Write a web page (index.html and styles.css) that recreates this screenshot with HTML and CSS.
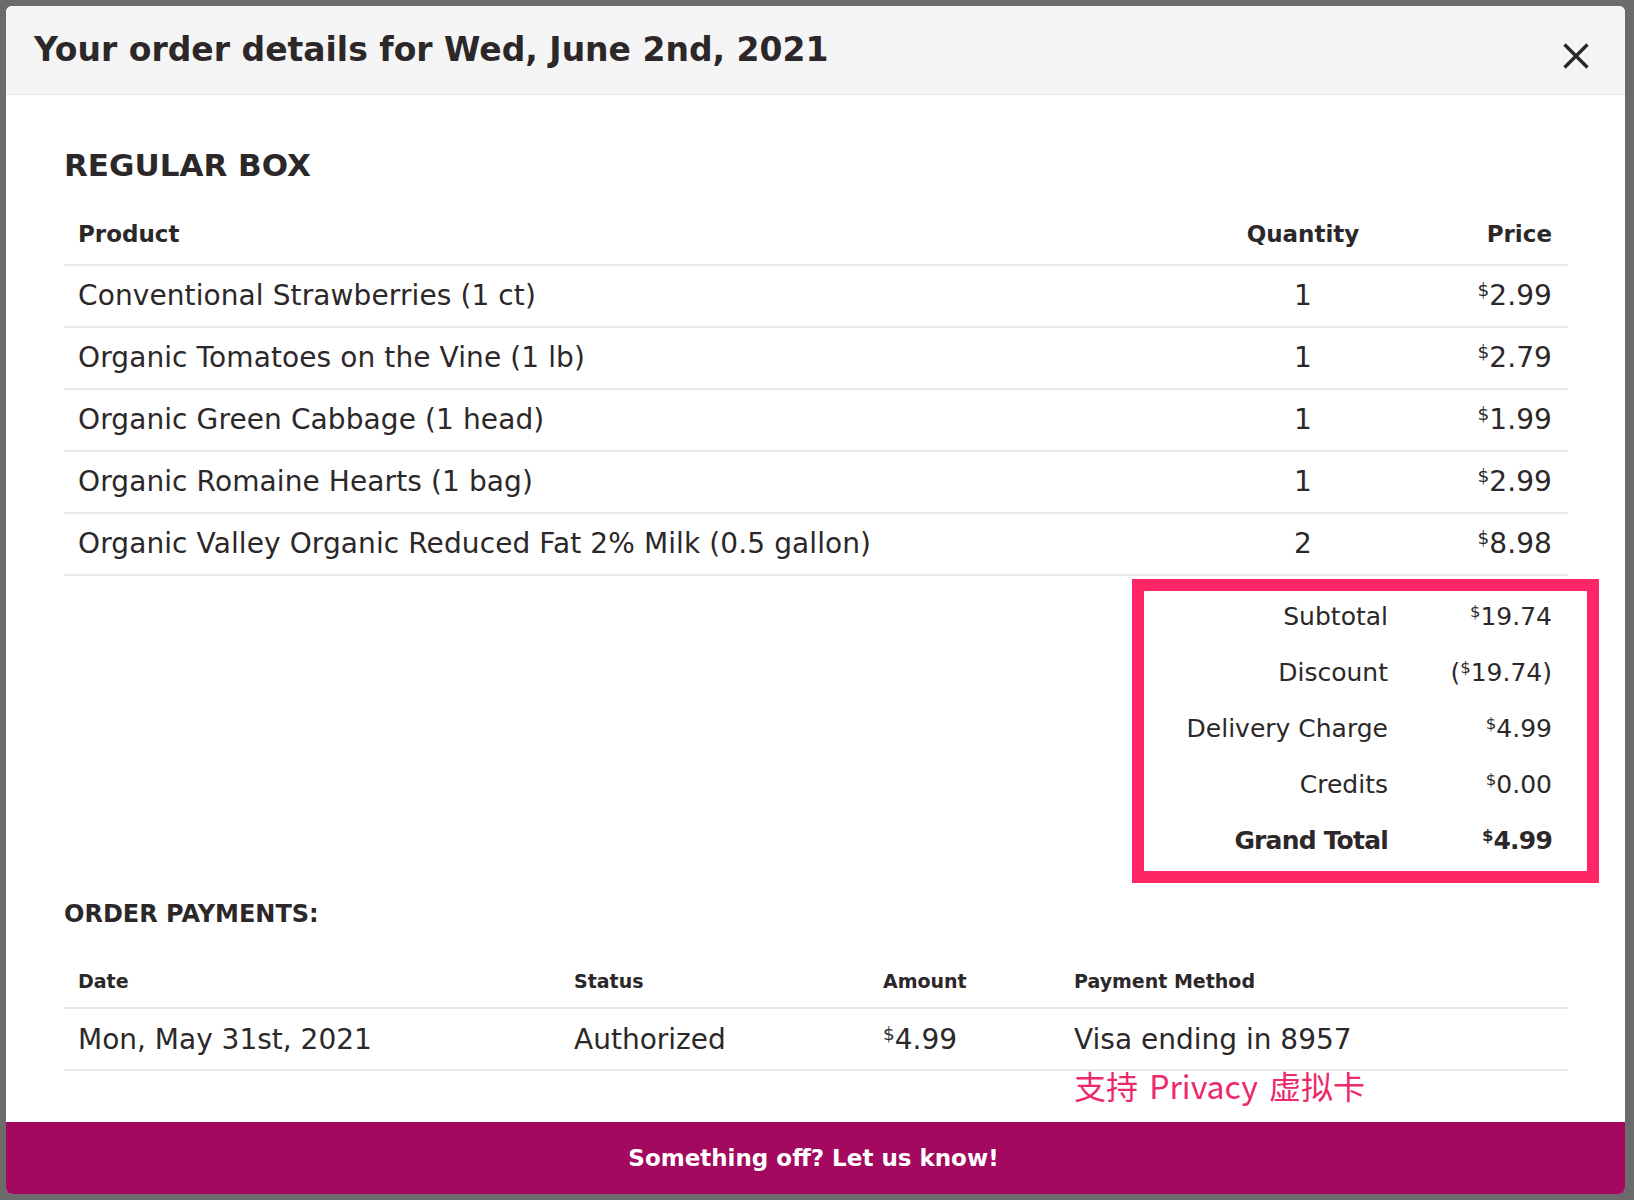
FILE: index.html
```html
<!DOCTYPE html>
<html lang="en">
<head>
<meta charset="utf-8">
<title>Order details</title>
<link rel="stylesheet" href="styles.css">
</head>
<body>
<div class="page">
  <div class="modal">
    <div class="modal-header">
      <h1 class="modal-title">Your order details for Wed, June 2nd, 2021</h1>
      <button class="close" aria-label="Close">
        <svg width="26" height="26" viewBox="0 0 26 26"><path d="M1.5 1.5 L24.5 24.5 M24.5 1.5 L1.5 24.5" stroke="#2c2829" stroke-width="3.4" fill="none"/></svg>
      </button>
    </div>
    <div class="modal-body">
      <h2 class="box-title">REGULAR BOX</h2>
      <table class="items">
        <colgroup><col class="c-prod"><col class="c-qty"><col class="c-price"></colgroup>
        <thead>
          <tr><th class="t-left">Product</th><th class="t-center">Quantity</th><th class="t-right">Price</th></tr>
        </thead>
        <tbody>
          <tr><td class="t-left">Conventional Strawberries (1 ct)</td><td class="t-center">1</td><td class="t-right"><sup>$</sup>2.99</td></tr>
          <tr><td class="t-left">Organic Tomatoes on the Vine (1 lb)</td><td class="t-center">1</td><td class="t-right"><sup>$</sup>2.79</td></tr>
          <tr><td class="t-left">Organic Green Cabbage (1 head)</td><td class="t-center">1</td><td class="t-right"><sup>$</sup>1.99</td></tr>
          <tr><td class="t-left">Organic Romaine Hearts (1 bag)</td><td class="t-center">1</td><td class="t-right"><sup>$</sup>2.99</td></tr>
          <tr><td class="t-left">Organic Valley Organic Reduced Fat 2% Milk (0.5 gallon)</td><td class="t-center">2</td><td class="t-right"><sup>$</sup>8.98</td></tr>
        </tbody>
      </table>
      <div class="summary-wrap">
        <div class="summary">
          <div class="s-label">Subtotal</div><div class="s-value"><sup>$</sup>19.74</div>
          <div class="s-label">Discount</div><div class="s-value">(<sup>$</sup>19.74)</div>
          <div class="s-label">Delivery Charge</div><div class="s-value"><sup>$</sup>4.99</div>
          <div class="s-label">Credits</div><div class="s-value"><sup>$</sup>0.00</div>
          <div class="s-label s-bold">Grand Total</div><div class="s-value s-bold"><sup>$</sup>4.99</div>
        </div>
      </div>
      <h3 class="payments-title">ORDER PAYMENTS:</h3>
      <table class="payments">
        <colgroup><col class="p-date"><col class="p-status"><col class="p-amount"><col class="p-method"></colgroup>
        <thead>
          <tr><th>Date</th><th>Status</th><th>Amount</th><th>Payment Method</th></tr>
        </thead>
        <tbody>
          <tr><td>Mon, May 31st, 2021</td><td>Authorized</td><td><sup>$</sup>4.99</td><td>Visa ending in 8957</td></tr>
        </tbody>
      </table>
      <div class="note-row"><span class="note">支持 Privacy 虚拟卡</span></div>
    </div>
    <div class="footer-bar">Something off? Let us know!</div>
  </div>
</div>
</body>
</html>
```
FILE: styles.css
```css
* { box-sizing: border-box; }
html, body { margin: 0; padding: 0; }
body {
  background: #6b6b6b;
  font-family: "DejaVu Sans", "Noto Sans CJK SC", sans-serif;
  color: #2c2829;
}
.page {
  width: 1634px;
  height: 1200px;
  padding: 6px 9px 6px 6px;
}
.modal {
  width: 1619px;
  height: 1188px;
  background: #ffffff;
  border-radius: 6px;
  overflow: hidden;
  display: flex;
  flex-direction: column;
}
.modal-header {
  height: 89px;
  flex: none;
  background: #f5f5f5;
  border-bottom: 1px solid #e7e7e7;
  display: flex;
  align-items: center;
  justify-content: space-between;
  padding: 0 36px 0 28px;
}
.modal-title {
  margin: 0;
  font-size: 33px;
  font-weight: bold;
  line-height: 40px;
}
.close {
  border: 0;
  padding: 0;
  background: none;
  width: 26px;
  height: 26px;
  align-self: flex-start;
  margin-top: 37px;
  display: block;
}
.close svg { display: block; }
.modal-body {
  flex: 1;
  padding: 0 57px 0 58px;
}
.box-title {
  margin: 50px 0 0;
  font-size: 31px;
  line-height: 40px;
  font-weight: bold;
}
table {
  width: 100%;
  border-collapse: collapse;
  table-layout: fixed;
}
.items { margin-top: 19px; }
.c-prod { width: 1136px; }
.c-qty { width: 206px; }
.c-price { width: 162px; }
.items th {
  height: 61px;
  font-size: 23px;
  font-weight: bold;
  border-bottom: 2px solid #e9e9e9;
  padding: 0 16px 0 14px;
}
.items td {
  height: 62px;
  font-size: 28px;
  letter-spacing: 0.1px;
  border-bottom: 2px solid #e9e9e9;
  padding: 0 16px 2px 14px;
  white-space: nowrap;
}
.t-left { text-align: left; }
.t-center { text-align: center; }
.items .t-center { padding-left: 0; padding-right: 0; }
.t-right { text-align: right; }
sup {
  font-size: 0.66em;
  vertical-align: 0.5em;
  line-height: 0;
  letter-spacing: 0;
}
.summary-wrap {
  display: flex;
  justify-content: flex-end;
  margin: 3px -31px 0 0;
}
.summary {
  width: 467px;
  border: 12px solid #ff2667;
  display: grid;
  grid-template-columns: 244px 164px;
  grid-auto-rows: 56px;
  padding-right: 35px;
  font-size: 25px;
}
.s-label, .s-value {
  text-align: right;
  white-space: nowrap;
  line-height: 52px;
}
.s-bold { font-weight: bold; letter-spacing: -0.8px; }
.payments-title {
  margin: 16px 0 0;
  font-size: 24px;
  line-height: 30px;
  font-weight: bold;
}
.payments { margin-top: 29px; }
.p-date { width: 496px; }
.p-status { width: 309px; }
.p-amount { width: 191px; }
.p-method { width: 508px; }
.payments th {
  height: 50px;
  font-size: 19px;
  font-weight: bold;
  text-align: left;
  padding: 0 0 4px 14px;
  border-bottom: 2px solid #e9e9e9;
}
.payments td {
  height: 62px;
  font-size: 28px;
  text-align: left;
  padding: 0 0 0 14px;
  border-bottom: 2px solid #e9e9e9;
  white-space: nowrap;
}
.note-row {
  padding-left: 1010px;
  line-height: 28px;
}
.note {
  font-family: "Noto Sans CJK SC", sans-serif;
  font-size: 32px;
  line-height: 28px;
  word-spacing: 4px;
  color: #ec2a6b;
}
.footer-bar {
  flex: none;
  height: 72px;
  background: #a30a5f;
  color: #ffffff;
  font-size: 23px;
  font-weight: bold;
  display: flex;
  align-items: center;
  justify-content: center;
  padding-right: 4px;
}
```
